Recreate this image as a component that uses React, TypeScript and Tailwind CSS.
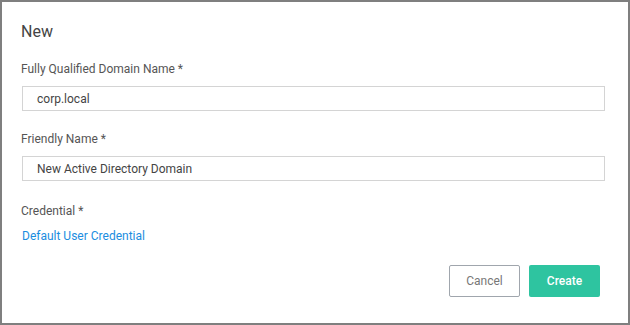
import React from "react"

const Field = ({ label, value }: { label: string; value: string }) => (
  <div className="flex flex-col">
    <label className="text-[12px] leading-[16px] text-[#555]">{label}</label>
    <div className="mt-[9px] ml-[1px] w-[583px] h-[25px] border border-[#d4d4d4] flex items-center pl-[14px] text-[12px] text-[#444]">
      {value}
    </div>
  </div>
)

const App = () => {
  return (
    <div className="w-[630px] h-[325px] bg-white border-2 border-[#7f7f7f] px-[19px] pt-[20px] flex flex-col" style={{ fontFamily: "Roboto, 'Liberation Sans', sans-serif" }}>
      <h2 className="text-[16px] leading-[20px] text-[#444]">New</h2>
      <div className="mt-[19px] flex flex-col gap-[20px]">
        <Field label="Fully Qualified Domain Name *" value="corp.local" />
        <Field label="Friendly Name *" value="New Active Directory Domain" />
      </div>
      <div className="mt-[22px] text-[12px] leading-[16px] text-[#555]">Credential *</div>
      <a className="mt-[9px] ml-[1px] text-[12px] leading-[16px] text-[#1b8de0] cursor-pointer">Default User Credential</a>
      <div className="mt-[21px] mr-[9px] flex justify-end gap-[9px]">
        <button className="w-[71px] h-[32px] border border-[#a0a6ad] rounded-[2px] text-[12px] text-[#777] bg-white">Cancel</button>
        <button className="w-[71px] h-[32px] rounded-[2px] text-[12px] text-white font-medium bg-[#2ec4a0]">Create</button>
      </div>
    </div>
  )
}

export default App
